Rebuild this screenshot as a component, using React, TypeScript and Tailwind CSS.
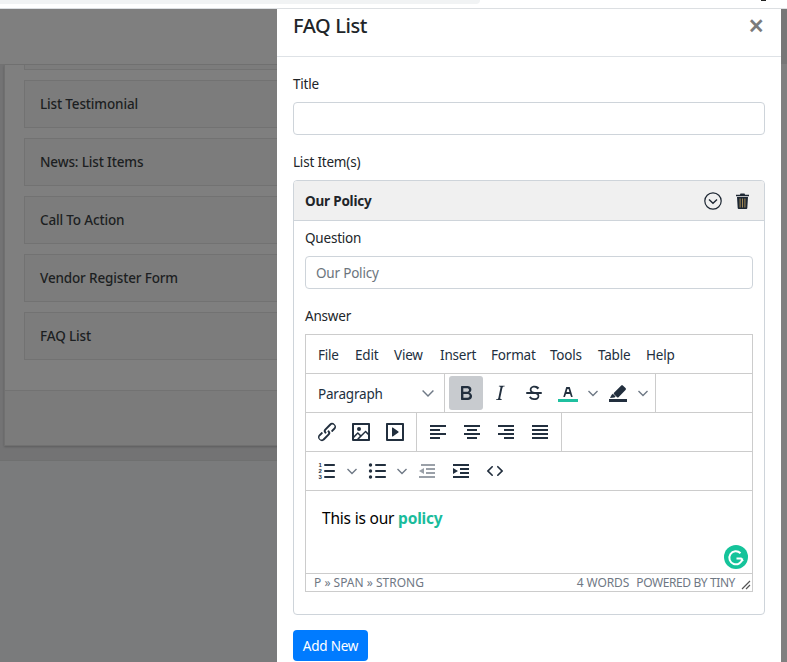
const F = { fontFamily: '"Noto Sans", sans-serif' };

function Ico({ children, className = "" }: { children: React.ReactNode; className?: string }) {
  return (
    <svg viewBox="0 0 24 24" width="24" height="24" fill="#222f3e" className={className}>
      {children}
    </svg>
  );
}

function Btn({ children, active }: { children: React.ReactNode; active?: boolean }) {
  return (
    <div className={`w-[34px] h-[34px] my-[2px] flex items-center justify-center rounded-[3px] ${active ? "bg-[#c8cbcf]" : ""}`}>
      {children}
    </div>
  );
}

function Chev({ w = "w-[16px]" }: { w?: string }) {
  return (
    <div className={`${w} h-[34px] my-[2px] flex items-center justify-center`}>
      <svg viewBox="0 0 10 10" width="10" height="10" fill="none" stroke="#6f7986" strokeWidth="1.4">
        <path d="M0.5 3 L5 7.5 L9.5 3" />
      </svg>
    </div>
  );
}

function Group({ children, border = true, className = "" }: { children: React.ReactNode; border?: boolean; className?: string }) {
  return <div className={`flex px-[4px] ${border ? "border-r border-[#ccc]" : ""} ${className}`}>{children}</div>;
}

function Item({ label }: { label: string }) {
  return (
    <div className="h-[48px] mb-[10px] border border-[#727272] bg-[#7c7c7c] flex items-center pl-[15px] text-[13.5px] tracking-[-0.15px] font-medium text-[#1c1f22]">
      {label}
    </div>
  );
}

const menu: [string, string][] = [
  ["File", "w-[37px]"],
  ["Edit", "w-[39px]"],
  ["View", "w-[46px]"],
  ["Insert", "w-[51px]"],
  ["Format", "w-[59px]"],
  ["Tools", "w-[48px]"],
  ["Table", "w-[48px]"],
  ["Help", "w-[48px]"],
];

const align = [
  "M4 5h16v2H4zM4 9h10v2H4zM4 13h16v2H4zM4 17h10v2H4z",
  "M4 5h16v2H4zM7 9h10v2H7zM4 13h16v2H4zM7 17h10v2H7z",
  "M4 5h16v2H4zM10 9h10v2H10zM4 13h16v2H4zM10 17h10v2H10z",
  "M4 5h16v2H4zM4 9h16v2H4zM4 13h16v2H4zM4 17h16v2H4z",
];

export default function App() {
  return (
    <div className="w-[787px] h-[662px] overflow-hidden flex flex-col bg-white" style={F}>
      <div className="h-[9px] shrink-0 bg-white border-b border-[#dcdfe2] flex items-start">
        <div className="w-[480px] h-[4px] bg-[#f1f3f4] rounded-br-[8px]" />
        <div className="ml-[281px] w-[5px] h-[1px] bg-[#222]" />
      </div>
      <div className="flex-1 flex min-h-0">
        <div className="w-[277px] shrink-0 overflow-hidden bg-[#7a7b7c]">
          <div className="w-[600px]">
            <div className="h-[56px] bg-[#7f7f7f] border-b border-[#727272]" />
            <div className="h-[395px] bg-[#737374] pl-[4px]">
              <div className="h-[381px] bg-[#7f7f7f] border border-t-0 border-[#707070] shadow-[0_1px_2px_rgba(0,0,0,0.2)] flex flex-col">
                <div className="h-[326px] px-[19px] border-b border-[#727272]">
                  <div className="h-[5px] mb-[10px] border border-t-0 border-[#727272] bg-[#7c7c7c]" />
                  <Item label="List Testimonial" />
                  <Item label="News: List Items" />
                  <Item label="Call To Action" />
                  <Item label="Vendor Register Form" />
                  <Item label="FAQ List" />
                </div>
                <div className="flex-1 bg-[#7b7b7b]" />
              </div>
            </div>
            <div className="border-t border-[#6f7070]" />
          </div>
        </div>

        <div className="w-[504px] shrink-0 bg-white text-[#212529] text-[13.5px] tracking-[-0.2px]">
          <div className="h-[48px] border-b border-[#dee2e6] pl-[16px] pr-[17px] flex items-start justify-between">
            <div className="text-[20px] leading-[34px] font-medium tracking-[-0.4px]">FAQ List</div>
            <div className="text-[28px] leading-[32px] font-semibold text-[#7b7b7b]">×</div>
          </div>
          <div className="px-[16px]">
            <div className="h-[20px] mt-[17px] mb-[8px] leading-[20px]">Title</div>
            <div className="h-[33px] border border-[#ced4da] rounded-[4px]" />
            <div className="h-[20px] mt-[17px] mb-[8px] leading-[20px]">List Item(s)</div>
            <div className="h-[435px] border border-[#ced4da] rounded-[4px]">
              <div className="h-[40px] bg-[#f0f0f0] border-b border-[#ced4da] rounded-t-[3px] flex items-center justify-between pl-[11px] pr-[15px]">
                <div className="font-bold pt-[1px]">Our Policy</div>
                <div className="flex items-center gap-[14px]">
                  <svg viewBox="0 0 18 18" width="18" height="18" fill="none" stroke="#1d2733" strokeWidth="1.2">
                    <circle cx="9" cy="9" r="8.200" />
                    <path d="M5 7.500 L9 11.200 L13 7.500" strokeWidth="1.400" />
                  </svg>
                  <svg viewBox="0 0 13 16" width="13" height="16">
                    <path d="M4.500 0.500h4l.6 1.200H13v1.600H0V1.700h3.900z" fill="#1d2733" />
                    <path d="M1 4h11l-.7 11a1 1 0 0 1-1 1H2.700a1 1 0 0 1-1-1z" fill="#1d2733" />
                    <path d="M3.600 5.500h1v9h-1zM6 5.500h1v9H6zM8.400 5.500h1v9h-1z" fill="#a58a55" />
                  </svg>
                </div>
              </div>
              <div className="px-[11px]">
                <div className="h-[20px] mt-[7px] mb-[8px] leading-[20px]">Question</div>
                <div className="h-[33px] border border-[#ced4da] rounded-[4px] px-[10px] pt-[1px] flex items-center text-[#6c757d]">
                  Our Policy
                </div>
                <div className="h-[20px] mt-[17px] mb-[8px] leading-[20px]">Answer</div>
                <div className="h-[258px] border border-[#ccc] flex flex-col text-[#222f3e]">
                  <div className="h-[39px] shrink-0 flex items-center pl-[12px] pt-[2px] border-b border-[#ccc]">
                    {menu.map(([m, w]) => (
                      <div key={m} className={w}>{m}</div>
                    ))}
                  </div>
                  <div className="h-[39px] shrink-0 flex border-b border-[#ccc]">
                    <div className="w-[139px] h-[38px] border-r border-[#ccc] flex items-center justify-between pl-[12px] pr-[10px] pt-[2px]">
                      <span>Paragraph</span>
                      <svg viewBox="0 0 10 10" width="12" height="12" fill="none" stroke="#6f7986" strokeWidth="1.200" className="-mt-[2px]">
                        <path d="M0.500 3 L5 7.500 L9.500 3" />
                      </svg>
                    </div>
                    <Group>
                      <Btn active>
                        <Ico><path d="M7.800 19c-.3 0-.5 0-.6-.2l-.2-.5V5.700c0-.2 0-.4.2-.5l.6-.2h5c1.500 0 2.700.3 3.500 1 .7.6 1.100 1.400 1.100 2.500a3 3 0 0 1-.6 1.900c-.4.6-1 1-1.600 1.200.4.1.9.3 1.300.6s.8.7 1 1.200c.4.4.5 1 .5 1.600 0 1.300-.4 2.300-1.300 3-.8.7-2.100 1-3.800 1H7.800zm5-8.300c.6 0 1.200-.1 1.600-.5.4-.3.6-.7.6-1.300 0-1.100-.8-1.700-2.300-1.700H9.300v3.500h3.400zm.5 6c.7 0 1.300-.1 1.700-.4.4-.4.6-.9.6-1.500s-.2-1-.7-1.400c-.4-.3-1-.4-2-.4H9.400v3.800h4z" /></Ico>
                      </Btn>
                      <Btn>
                        <Ico><path d="M16.700 4.700l-.1.9h-.3c-.6 0-1 0-1.400.3-.3.3-.4.6-.5 1.100l-2.100 9.800v.6c0 .5.4.8 1.400.8h.2l-.2.8H8l.2-.8h.2c1.100 0 1.800-.5 2-1.500l2-9.800.1-.5c0-.6-.4-.8-1.400-.8h-.3l.2-.9h5.800z" /></Ico>
                      </Btn>
                      <Btn>
                        <Ico>
                          <path d="M15.600 8.500c-.5-.7-1-1.100-1.300-1.300-.6-.4-1.300-.6-2-.6-2.700 0-2.800 1.700-2.800 2.100 0 1.600 1.800 2 3.200 2.300 4.400.9 4.600 2.800 4.600 3.900 0 1.400-.7 4.100-5 4.100A6.200 6.200 0 0 1 7 16.400l1.500-1.100c.4.6 1.600 2 3.700 2 1.600 0 2.500-.4 3-1 .3-.4.4-.9.4-1.300 0-1.600-1.800-2-3.200-2.300-4.400-.9-4.600-2.800-4.600-3.900 0-1.400.7-4.100 5-4.100 1.200 0 2.300.3 3.300 1 .3.2.8.6 1.300 1.300l-1.300.8z" />
                          <path d="M5 11h14a1 1 0 0 1 0 2H5a1 1 0 0 1 0-2z" />
                        </Ico>
                      </Btn>
                      <Btn>
                        <Ico>
                          <path d="M2 18h20v3H2z" fill="#1fc0a0" />
                          <path d="M8.700 16h-.8a.5.5 0 0 1-.5-.6l2.700-9c.1-.3.3-.4.5-.4h2.800c.2 0 .4.1.5.4l2.700 9a.5.5 0 0 1-.5.6h-.8a.5.5 0 0 1-.4-.4l-.7-2.200c0-.3-.3-.4-.5-.4h-3.400c-.2 0-.4.1-.5.4l-.7 2.200c0 .3-.2.4-.4.4zm2.600-7.600l-.6 2a.5.5 0 0 0 .5.6h1.600a.5.5 0 0 0 .5-.6l-.6-2c0-.3-.3-.4-.5-.4h-.4c-.2 0-.4.1-.5.4z" />
                        </Ico>
                      </Btn>
                      <Chev />
                      <Btn>
                        <Ico>
                          <path d="M3 18h18v3H3z" />
                          <path d="M8.500 16.500L4 17l1.500-3 1.300-1.200 2.800 2.700zM8 11.800l7-7c.6-.6 1.500-.6 2.100 0l2.400 2.100c.6.6.6 1.500 0 2.100l-7 7.200c-.4.400-1 .4-1.400 0L8 13.200c-.4-.4-.4-1 0-1.400z" />
                        </Ico>
                      </Btn>
                      <Chev />
                    </Group>
                  </div>
                  <div className="h-[39px] shrink-0 flex border-b border-[#ccc]">
                    <Group className="w-[111px]">
                      <Btn>
                        <Ico><path d="M6.200 12.300a1 1 0 0 1 1.400 1.400l-2.100 2.100a2 2 0 1 0 2.700 2.700l4.800-4.800a1 1 0 0 0 0-1.400 1 1 0 1 1 1.400-1.300 2.900 2.900 0 0 1 0 4L9.600 20a3.900 3.900 0 0 1-5.500-5.500l2-2zm11.600-.6a1 1 0 0 1-1.400-1.400l2-2a2 2 0 1 0-2.600-2.800L11 10.300a1 1 0 0 0 0 1.400A1 1 0 1 1 9.600 13a2.900 2.900 0 0 1 0-4L14.400 4a3.900 3.900 0 0 1 5.500 5.500l-2 2z" /></Ico>
                      </Btn>
                      <Btn>
                        <Ico><path d="M5 15.700l3.300-3.200c.3-.3.7-.3 1 0L12 15l4.100-4c.3-.4.8-.4 1 0l2 1.900V5H5v10.700zM5 18V19h3l2.800-2.900-2-2L5 17.900zm14-3l-2.500-2.400-6.400 6.500H19v-4zM4 3h16c.6 0 1 .4 1 1v16c0 .6-.4 1-1 1H4a1 1 0 0 1-1-1V4c0-.6.4-1 1-1zm6 8a2 2 0 1 0 0-4 2 2 0 0 0 0 4z" fillRule="evenodd" /></Ico>
                      </Btn>
                      <Btn>
                        <Ico><path d="M4 3h16c.6 0 1 .4 1 1v16c0 .6-.4 1-1 1H4a1 1 0 0 1-1-1V4c0-.6.4-1 1-1zm1 2v14h14V5H5zm4.800 2.600l5.600 4a.5.5 0 0 1 0 .8l-5.600 4A.5.5 0 0 1 9 16V8a.5.5 0 0 1 .8-.4z" fillRule="evenodd" /></Ico>
                      </Btn>
                    </Group>
                    <Group className="w-[145px]">
                      {align.map((d) => (
                        <Btn key={d}><Ico><path d={d} /></Ico></Btn>
                      ))}
                    </Group>
                  </div>
                  <div className="h-[39px] shrink-0 flex border-b border-[#ccc]">
                    <Group border={false}>
                      <Btn>
                        <Ico>
                          <path d="M10 17h9c.6 0 1 .4 1 1s-.4 1-1 1h-9a1 1 0 0 1 0-2zm0-6h9c.6 0 1 .4 1 1s-.4 1-1 1h-9a1 1 0 0 1 0-2zm0-6h9c.6 0 1 .4 1 1s-.4 1-1 1h-9a1 1 0 1 1 0-2z" />
                          <text x="3.500" y="8" fontSize="6" fontWeight="700" fontFamily="Liberation Sans">1</text>
                          <text x="3.500" y="14" fontSize="6" fontWeight="700" fontFamily="Liberation Sans">2</text>
                          <text x="3.500" y="20" fontSize="6" fontWeight="700" fontFamily="Liberation Sans">3</text>
                        </Ico>
                      </Btn>
                      <Chev />
                      <Btn>
                        <Ico>
                          <path d="M11 5h9c.6 0 1 .4 1 1s-.4 1-1 1h-9a1 1 0 0 1 0-2zm0 6h9c.6 0 1 .4 1 1s-.4 1-1 1h-9a1 1 0 0 1 0-2zm0 6h9c.6 0 1 .4 1 1s-.4 1-1 1h-9a1 1 0 0 1 0-2z" />
                          <circle cx="5.500" cy="6" r="1.700" />
                          <circle cx="5.500" cy="12" r="1.700" />
                          <circle cx="5.500" cy="18" r="1.700" />
                        </Ico>
                      </Btn>
                      <Chev />
                      <Btn>
                        <Ico>
                          <path d="M6 5h14v2H6zM11 9h9v2h-9zM11 13h9v2h-9zM4 17h16v2H4zM9 9v6L4 12z" fill="#9aa0a8" />
                        </Ico>
                      </Btn>
                      <Btn>
                        <Ico>
                          <path d="M4 5h16v2H4zM11 9h9v2h-9zM11 13h9v2h-9zM4 17h16v2H4zM4 9v6l5-3z" />
                        </Ico>
                      </Btn>
                      <Btn>
                        <Ico><path d="M9.800 15.700c.3.3.3.8 0 1-.3.4-.9.4-1.200 0l-4.400-4.100a.8.8 0 0 1 0-1.200l4.400-4.200c.3-.3.9-.3 1.200 0 .3.3.3.8 0 1.100L6 12l3.800 3.700zm4.400 0c-.3.3-.3.8 0 1 .3.4.9.4 1.200 0l4.400-4.100a.8.8 0 0 0 0-1.200l-4.400-4.200a.8.8 0 0 0-1.200 0c-.3.3-.3.8 0 1.100L18 12l-3.800 3.700z" /></Ico>
                      </Btn>
                    </Group>
                  </div>
                  <div className="relative h-[83px] shrink-0 border-b border-[#ccc] pl-[16px] pt-[16px] text-[15.5px] leading-[22px] text-black">
                    This is our <strong className="text-[#1abc9c]">policy</strong>
                    <div className="absolute right-[4px] bottom-[4px] w-[24px] h-[24px] rounded-full bg-[#15c39a] flex items-center justify-center">
                      <svg viewBox="0 0 24 24" width="24" height="24" fill="none" stroke="white" strokeWidth="2">
                        <path d="M16.500 8.300A6.500 6.500 0 1 0 18.300 13.500" />
                        <path d="M12.500 13.500h4.500l2 2.500" />
                      </svg>
                    </div>
                  </div>
                  <div className="flex-1 min-h-0 flex items-center pl-[8px] text-[12px] leading-[14px] tracking-normal text-[#6f7884]">
                    <span>P » SPAN » STRONG</span>
                    <span className="ml-auto tracking-[-0.1px]">4 WORDS</span>
                    <span className="ml-[7px] tracking-[-0.4px]">POWERED BY TINY</span>
                    <svg viewBox="0 0 10 10" width="10" height="10" className="ml-[6px] mr-[1px] self-end mb-[1px]" stroke="#555" strokeWidth="1.200">
                      <path d="M1 9 L9 1 M5 9 L9 5" />
                    </svg>
                  </div>
                </div>
              </div>
            </div>
            <div className="mt-[15px] pt-[1px] w-[75px] h-[31px] rounded-[4px] bg-[#007bff] text-white flex items-center justify-center">
              Add New
            </div>
          </div>
        </div>

        <div className="flex-1 flex flex-col">
          <div className="h-[55px] bg-[#777777]" />
          <div className="flex-1 bg-[#808080]" />
        </div>
      </div>
    </div>
  );
}
